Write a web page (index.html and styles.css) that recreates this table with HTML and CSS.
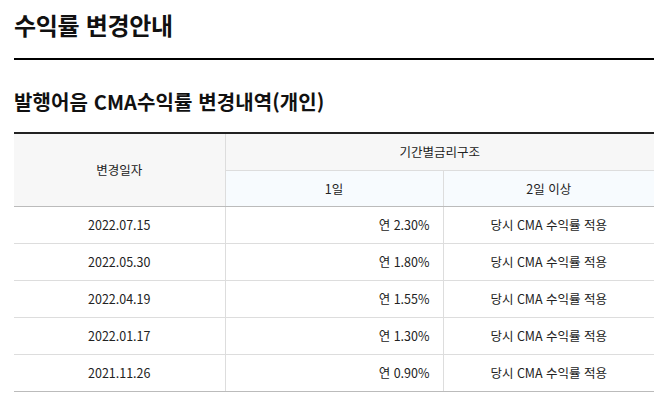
FILE: index.html
```html
<!DOCTYPE html>
<html lang="ko">
<head>
<meta charset="utf-8">
<link rel="stylesheet" href="styles.css">
</head>
<body>
<div class="page">
  <h1 class="title">수익률 변경안내</h1>
  <h2 class="subtitle">발행어음 CMA수익률 변경내역(개인)</h2>
  <table class="rates">
    <colgroup><col class="c1"><col class="c2"><col class="c3"></colgroup>
    <thead>
      <tr>
        <th rowspan="2" class="h-date">변경일자</th>
        <th colspan="2" class="h-group">기간별금리구조</th>
      </tr>
      <tr class="sub">
        <th>1일</th>
        <th>2일 이상</th>
      </tr>
    </thead>
    <tbody>
      <tr><td>2022.07.15</td><td class="num">연 2.30%</td><td>당시 CMA 수익률 적용</td></tr>
      <tr><td>2022.05.30</td><td class="num">연 1.80%</td><td>당시 CMA 수익률 적용</td></tr>
      <tr><td>2022.04.19</td><td class="num">연 1.55%</td><td>당시 CMA 수익률 적용</td></tr>
      <tr><td>2022.01.17</td><td class="num">연 1.30%</td><td>당시 CMA 수익률 적용</td></tr>
      <tr><td>2021.11.26</td><td class="num">연 0.90%</td><td>당시 CMA 수익률 적용</td></tr>
    </tbody>
  </table>
</div>
</body>
</html>
```

FILE: styles.css
```css
* { box-sizing: border-box; }
html, body { margin: 0; padding: 0; background: #fff; }
body {
  font-family: "Noto Sans CJK KR", "Noto Sans", sans-serif;
  color: #111;
}
.page {
  padding: 0 16px 0 14px;
}
.title {
  margin: 0;
  padding: 7px 0 15px;
  font-size: 24px;
  line-height: 36px;
  font-weight: 700;
  letter-spacing: -0.3px;
  border-bottom: 2px solid #000;
}
.subtitle {
  margin: 0;
  padding: 28px 0 16px;
  font-size: 20px;
  line-height: 28px;
  font-weight: 700;
  letter-spacing: 0.1px;
}
.rates {
  width: 100%;
  border-collapse: collapse;
  border-top: 2px solid #222;
  border-bottom: 1px solid #bbb;
  font-size: 12.5px;
  color: #222;
}
.c1 { width: 211px; }
.c2 { width: 218px; }
.rates th {
  font-weight: 400;
  background: #f7f7f7;
  height: 37px;
  padding: 0;
  border-left: 1px solid #ddd;
  border-bottom: 1px solid #ddd;
}
.rates th:first-child { border-left: none; }
.rates .sub th {
  background: #f7fbfe;
  border-bottom: 1px solid #bbb;
  height: 36px;
}
.rates .sub th:first-child { border-left: 1px solid #ddd; }
.rates .h-date { border-bottom: 1px solid #bbb; }
.rates td {
  height: 37px;
  padding: 0 13px;
  text-align: center;
  border-left: 1px solid #ddd;
  border-bottom: 1px solid #ddd;
}
.rates td:first-child { border-left: none; }
.rates tbody tr:last-child td { border-bottom: 1px solid #bbb; }
.rates td.num { text-align: right; }
```
